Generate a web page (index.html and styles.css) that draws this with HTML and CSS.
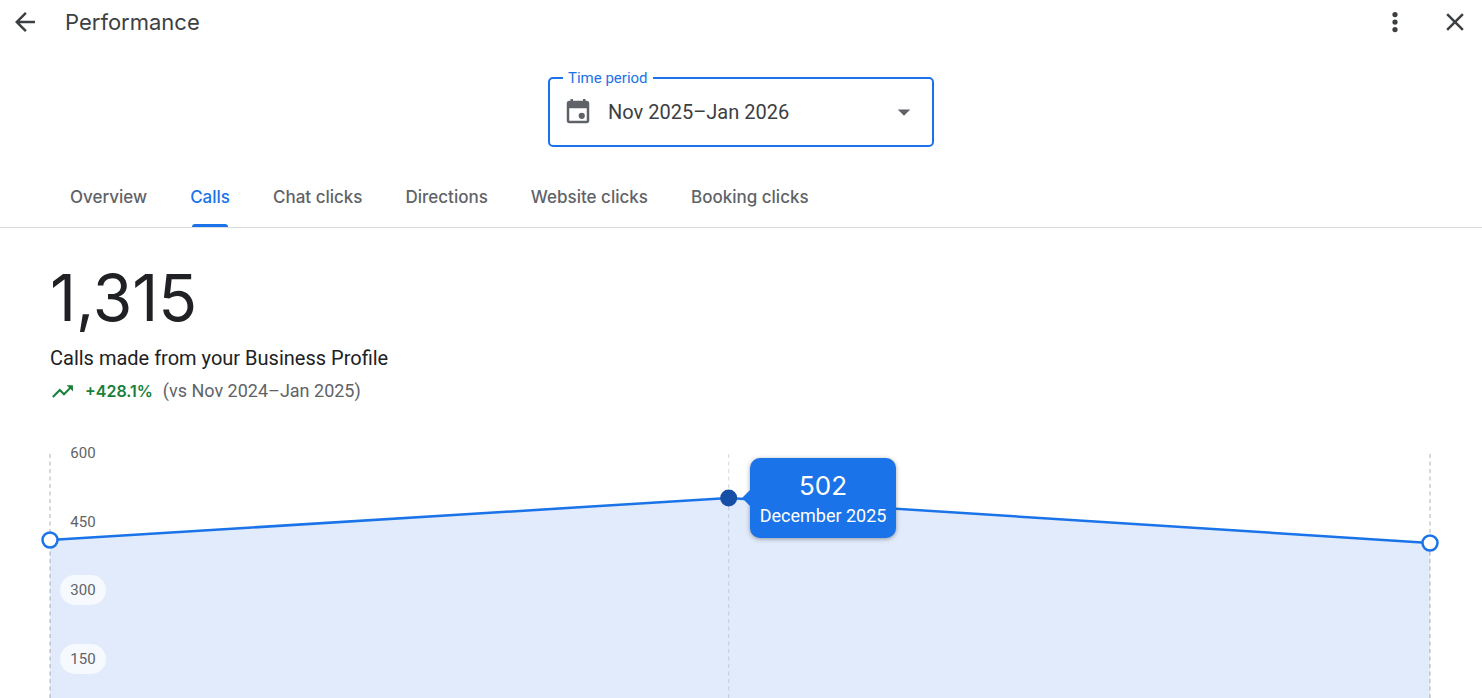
FILE: index.html
```html
<!DOCTYPE html>
<html lang="en">
<head>
  <meta charset="UTF-8" />
  <meta name="viewport" content="width=device-width, initial-scale=1" />
  <title>Performance</title>
  <link rel="stylesheet" href="styles.css">
</head>
<body>
  <div class="page">
    <header class="top-bar">
      <button class="icon-btn" type="button" aria-label="Back">
        <svg class="icon" viewBox="0 0 24 24"><path d="M20 11H7.83l5.59-5.59L12 4l-8 8 8 8 1.41-1.41L7.83 13H20v-2z"/></svg>
      </button>
      <h1 class="title">Performance</h1>
      <button class="icon-btn" type="button" aria-label="More options">
        <svg class="icon" viewBox="0 0 24 24"><circle cx="12" cy="6" r="2.1"/><circle cx="12" cy="12" r="2.1"/><circle cx="12" cy="18" r="2.1"/></svg>
      </button>
      <button class="icon-btn" type="button" aria-label="Close">
        <svg class="icon" viewBox="0 0 24 24"><path d="M19 6.41L17.59 5 12 10.59 6.41 5 5 6.41 10.59 12 5 17.59 6.41 19 12 13.41 17.59 19 19 17.59 13.41 12z"/></svg>
      </button>
    </header>

    <fieldset class="period">
      <legend><label for="period">Time period</label></legend>
      <div class="period-row">
        <svg class="icon" viewBox="0 0 24 24"><path d="M19 3h-1V1.500h-2V3H8V1.500H6V3H5c-1.110 0-2 .9-2 2v14c0 1.100.89 2 2 2h14c1.100 0 2-.9 2-2V5c0-1.100-.9-2-2-2zm0 16H5V9h14v10z"/><circle cx="15" cy="15" r="2.500"/></svg>
        <select id="period" name="period">
          <option>Nov 2025–Jan 2026</option>
        </select>
        <svg class="icon" viewBox="0 0 24 24"><path d="M7 10l5 5 5-5z"/></svg>
      </div>
    </fieldset>

    <nav class="tabs">
      <a href="#overview">Overview</a>
      <a class="active" href="#calls">Calls</a>
      <a href="#chat">Chat clicks</a>
      <a href="#directions">Directions</a>
      <a href="#website">Website clicks</a>
      <a href="#booking">Booking clicks</a>
    </nav>

    <main class="content">
      <div class="total">1,315</div>
      <p class="caption">Calls made from your Business Profile</p>
      <p class="trend">
        <svg class="trend-icon" viewBox="0 0 24 24"><path d="M16 6l2.290 2.290-4.880 4.880-4-4L2 16.590 3.410 18l6-6 4 4 6.300-6.290L22 12V6z"/></svg>
        <strong>+428.1%</strong>
        <span>(vs Nov 2024–Jan 2025)</span>
      </p>

      <div class="chart">
        <svg class="plot">
          <svg width="100%" height="275" viewBox="0 0 100 275" preserveAspectRatio="none">
            <polygon class="area" points="0,87 49.18,45 100,90 100,275 0,275"/>
          </svg>
          <line class="guide" x1="0" y1="1" x2="0" y2="275"/>
          <line class="guide thin" x1="49.18%" y1="1" x2="49.18%" y2="275"/>
          <line class="guide" x1="100%" y1="1" x2="100%" y2="275"/>
          <line class="series" x1="0" y1="87" x2="49.18%" y2="45"/>
          <line class="series" x1="49.18%" y1="45" x2="100%" y2="90"/>
          <circle class="point" cx="0" cy="87" r="7.5"/>
          <circle class="point-on" cx="49.18%" cy="45" r="8.5"/>
          <circle class="point" cx="100%" cy="90" r="7.5"/>
        </svg>
        <ul class="ticks">
          <li>600</li>
          <li>450</li>
          <li class="pill">300</li>
          <li class="pill">150</li>
        </ul>
        <div class="tooltip">
          <div class="tooltip-value">502</div>
          <div class="tooltip-date">December 2025</div>
        </div>
      </div>
    </main>
  </div>
</body>
</html>
```

FILE: styles.css
```css
* { box-sizing: border-box; }
body {
  margin: 0;
  background: #fff;
  color: #202124;
  font-family: Roboto, sans-serif;
}
.page {
  height: 100vh;
  overflow: hidden;
}
.icon {
  display: block;
  flex: none;
  width: 30px;
  height: 30px;
  fill: currentColor;
}
.top-bar {
  display: flex;
  align-items: center;
  gap: 30px;
  height: 44px;
  padding: 0 12px 0 10px;
  color: #3c4043;
}
.icon-btn {
  padding: 0;
  border: none;
  background: none;
  color: inherit;
  cursor: pointer;
}
.title {
  flex: 1;
  margin: 0 0 0 -5px;
  font-family: "Google Sans", Inter, sans-serif;
  font-size: 22px;
  font-weight: 400;
}
.period {
  width: 386px;
  max-width: 100%;
  margin: 24px auto 0;
  padding: 0 13px;
  border: 2px solid #1a73e8;
  border-radius: 5px;
  color: #5f6368;
}
.period legend {
  padding: 0 5px;
  color: #1a73e8;
  font-size: 15px;
  line-height: 20px;
}
.period-row {
  display: flex;
  align-items: center;
  gap: 15px;
  height: 57px;
  padding-bottom: 9px;
}
.period select {
  flex: 1;
  padding: 0;
  border: none;
  outline: none;
  background: none;
  appearance: none;
  color: #3c4043;
  font-family: inherit;
  font-size: 20px;
}
.tabs {
  display: flex;
  gap: 3px;
  margin-top: 20px;
  padding: 0 50px;
  border-bottom: 1px solid #dadce0;
}
.tabs a {
  position: relative;
  padding: 0 20px;
  color: #5f6368;
  font-family: "Google Sans", Inter, sans-serif;
  font-size: 17px;
  font-weight: 500;
  line-height: 60px;
  text-decoration: none;
  white-space: nowrap;
}
.tabs .active { color: #1a73e8; }
.tabs .active::after {
  content: "";
  position: absolute;
  left: 22px;
  right: 22px;
  bottom: 0;
  height: 3px;
  border-radius: 3px 3px 0 0;
  background: #1a73e8;
}
.content { padding: 30px 52px 0 50px; }
.total {
  font-family: "Google Sans", Inter, sans-serif;
  font-size: 64px;
  line-height: 80px;
}
.caption {
  margin: 4px 0 0;
  font-size: 20px;
  line-height: 32px;
}
.trend {
  display: flex;
  align-items: center;
  gap: 10px;
  margin: 0;
  color: #5f6368;
  font-size: 18px;
  line-height: 34px;
}
.trend-icon {
  width: 25px;
  height: 25px;
  fill: #188038;
}
.trend strong {
  color: #188038;
  font-family: "Google Sans", Inter, sans-serif;
  font-size: 16px;
  font-weight: 600;
}
.chart {
  position: relative;
  margin-top: 45px;
}
.plot {
  display: block;
  width: 100%;
  height: 275px;
  overflow: visible;
}
.area { fill: #e2ebfc; }
.guide {
  stroke: #80868b;
  stroke-opacity: 0.32;
  stroke-width: 2;
  stroke-dasharray: 4 3.5;
}
.thin { stroke-width: 1; }
.series {
  stroke: #1a73e8;
  stroke-width: 2.5;
}
.point {
  fill: #fff;
  stroke: #1a73e8;
  stroke-width: 2.5;
}
.point-on { fill: #174ea6; }
.ticks {
  display: flex;
  flex-direction: column;
  justify-content: space-between;
  position: absolute;
  top: -15px;
  left: 10px;
  width: 46px;
  height: 236px;
  margin: 0;
  padding: 0;
  list-style: none;
  color: #5f6368;
  font-size: 15px;
  line-height: 30px;
  text-align: center;
}
.ticks .pill {
  border-radius: 15px;
  background: rgba(255, 255, 255, 0.7);
}
.tooltip {
  position: absolute;
  top: 5px;
  left: calc(49.18% + 21px);
  padding: 10px;
  border-radius: 10px;
  background: #1a73e8;
  box-shadow: 0 1px 4px rgba(60, 64, 67, 0.5);
  color: #fff;
  text-align: center;
  white-space: nowrap;
}
.tooltip::before {
  content: "";
  position: absolute;
  top: 32px;
  left: -8px;
  border: 8px solid transparent;
  border-left: none;
  border-right-color: #1a73e8;
}
.tooltip-value {
  font-family: "Google Sans", Inter, sans-serif;
  font-size: 26px;
  line-height: 36px;
}
.tooltip-date {
  font-size: 18px;
  line-height: 24px;
}
```
